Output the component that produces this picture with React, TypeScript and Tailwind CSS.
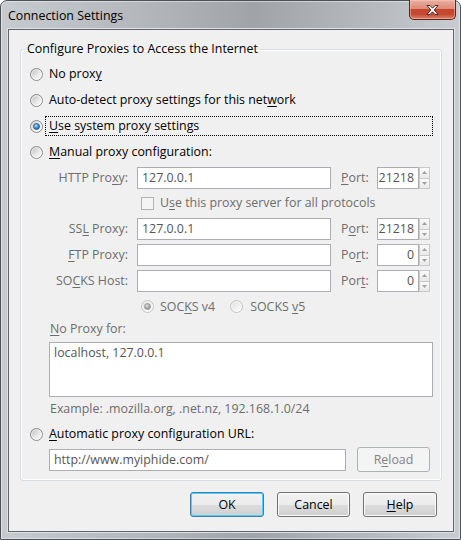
import React from "react";

// Windows 7 style "Connection Settings" dialog

type RadioState = "off" | "on" | "disabledOn" | "disabledOff";

function Radio({ state = "off" }: { state?: RadioState }) {
  const disabled = state === "disabledOn" || state === "disabledOff";
  const checked = state === "on" || state === "disabledOn";
  const id = `radio-${state}`;
  return (
    <svg width="13" height="13" viewBox="0 0 13 13" className="shrink-0">
      <defs>
        <linearGradient id={`${id}-bg`} x1="0" y1="0" x2="1" y2="1">
          <stop offset="0" stopColor={disabled ? "#dcdcdc" : "#b9b9b9"} />
          <stop offset="0.6" stopColor={disabled ? "#f2f2f2" : "#ececec"} />
          <stop offset="1" stopColor="#fbfbfb" />
        </linearGradient>
        <radialGradient id={`${id}-dot`} cx="0.4" cy="0.35" r="0.75">
          <stop offset="0" stopColor={disabled ? "#e2e2e2" : "#b4e4ff"} />
          <stop offset="0.55" stopColor={disabled ? "#a8a8a8" : "#3a86d4"} />
          <stop offset="1" stopColor={disabled ? "#8c8c8c" : "#164f96"} />
        </radialGradient>
      </defs>
      <circle
        cx="6.5"
        cy="6.5"
        r="6"
        fill={`url(#${id}-bg)`}
        stroke={disabled ? "#c4c4c4" : "#8b8b8b"}
      />
      <circle cx="6.5" cy="6.5" r="4.8" fill="none" stroke="#ffffff" strokeOpacity="0.55" />
      {checked && (
        <circle
          cx="6.5"
          cy="6.5"
          r="3"
          fill={`url(#${id}-dot)`}
          stroke={disabled ? "#8e8e8e" : "#21507f"}
          strokeWidth="0.7"
        />
      )}
    </svg>
  );
}

// access key underline
function K({ c }: { c: string }) {
  return <span className="underline underline-offset-[2px] decoration-1">{c}</span>;
}

function TextBox({
  value = "",
  className = "",
  alignRight = false,
}: {
  value?: string;
  className?: string;
  alignRight?: boolean;
}) {
  return (
    <div
      className={`h-[22px] bg-white border border-[#abadb3] flex items-center px-[4px] text-[#555555] whitespace-nowrap ${
        alignRight ? "justify-end" : ""
      } ${className}`}
    >
      {value}
    </div>
  );
}

function Spinner() {
  return (
    <div className="flex flex-col w-[11px] h-[22px] shrink-0">
      <div className="flex-1 border border-[#c9c9c9] bg-gradient-to-b from-[#fafafa] to-[#e9e9e9] flex items-center justify-center">
        <svg width="5" height="3" viewBox="0 0 5 3">
          <path d="M0 3 L2.5 0 L5 3 Z" fill="#a0a0a0" />
        </svg>
      </div>
      <div className="flex-1 border border-t-0 border-[#c9c9c9] bg-gradient-to-b from-[#fafafa] to-[#e9e9e9] flex items-center justify-center">
        <svg width="5" height="3" viewBox="0 0 5 3">
          <path d="M0 0 L2.5 3 L5 0 Z" fill="#a0a0a0" />
        </svg>
      </div>
    </div>
  );
}

function ProxyRow({
  label,
  host,
  port,
  portLabel,
  className = "",
}: {
  label: React.ReactNode;
  host: string;
  port: string;
  portLabel: React.ReactNode;
  className?: string;
}) {
  return (
    <div className={`flex items-center h-[22px] ${className}`}>
      <div className="w-[98px] text-right text-[#6d6d6d] whitespace-nowrap">{label}</div>
      <TextBox value={host} className="ml-[9px] w-[194px]" />
      <div className="ml-[10px] w-[36px] text-[#6d6d6d]">{portLabel}</div>
      <TextBox value={port} alignRight className="w-[42px] px-[2px]" />
      <Spinner />
    </div>
  );
}

function Button({
  children,
  primary = false,
  disabled = false,
  className = "",
}: {
  children: React.ReactNode;
  primary?: boolean;
  disabled?: boolean;
  className?: string;
}) {
  if (disabled) {
    return (
      <div
        className={`h-[25px] rounded-[3px] border border-[#adb2b5] bg-[#f4f4f4] text-[#838383] flex items-center justify-center ${className}`}
      >
        {children}
      </div>
    );
  }
  return (
    <div
      className={`h-[25px] rounded-[3px] border ${
        primary ? "border-[#3c7fb1] shadow-[inset_0_0_0_1px_#48d1ff]" : "border-[#707070] shadow-[inset_0_0_0_1px_#fcfcfc]"
      } bg-[linear-gradient(180deg,#f2f2f2_0%,#ebebeb_50%,#dddddd_50%,#cfcfcf_100%)] text-black flex items-center justify-center ${className}`}
    >
      {children}
    </div>
  );
}

export default function App() {
  return (
    <div className="w-[461px] h-[540px] font-['Open_Sans','Noto_Sans',sans-serif] text-[12.4px] leading-[16px] text-black">
      <div className="relative w-full h-full rounded-t-[7px] border border-[#4d5157] bg-[linear-gradient(90deg,#c6cbd0_0%,#b4b8bd_30%,#a0a4a9_55%,#b5b9be_80%,#c9cdd1_100%)] shadow-[inset_0_0_0_1px_rgba(255,255,255,0.45)] flex flex-col">
        {/* title bar */}
        <div className="h-[28px] flex items-center pl-[7px] pt-[1px] text-black">Connection Settings</div>

        {/* close button */}
        <div className="absolute top-[-1px] right-[4px] w-[47px] h-[20px] rounded-b-[5px] border border-t-0 border-[#5b2519] bg-[linear-gradient(180deg,#eab0a2_0%,#dc8b77_45%,#c7442b_50%,#c54a31_75%,#d8836c_100%)] shadow-[inset_0_0_0_1px_rgba(255,200,190,0.5)] flex items-center justify-center">
          <svg width="15" height="12" viewBox="0 0 15 12">
            <path
              d="M2 1.5 L5 1.5 L7.5 4.2 L10 1.5 L13 1.5 L9.2 6 L13 10.5 L10 10.5 L7.5 7.8 L5 10.5 L2 10.5 L5.8 6 Z"
              fill="#ffffff"
              stroke="#4a2a28"
              strokeWidth="1"
              strokeLinejoin="round"
            />
          </svg>
        </div>

        {/* client area */}
        <div className="ml-[7px] w-[446px] flex-1 mb-[7px] border border-[#62666b] shadow-[0_0_0_1px_#dde0e4] bg-[#f0f0f0] pl-[11px] pt-[11px] flex flex-col">
          <fieldset className="w-[420px] border border-[#d5dfe5] rounded-[3px] pb-[8px] shadow-[inset_0_0_0_1px_#ffffff]">
            <legend className="ml-[5px] px-[1px] leading-[16px]">Configure Proxies to Access the Internet</legend>

            <div className="pt-[4px] pl-[9px] pr-[8px] flex flex-col">
              <div className="h-[26px] flex items-center">
                <Radio />
                <span className="ml-[6px]">
                  No prox<K c="y" />
                </span>
              </div>
              <div className="h-[26px] flex items-center">
                <Radio />
                <span className="ml-[6px]">
                  Auto-detect proxy settings for this net<K c="w" />ork
                </span>
              </div>
              <div className="h-[26px] flex items-center">
                <Radio state="on" />
                <span className="ml-[2px] flex-1 h-[20px] flex items-center px-[3px] border border-dotted border-black">
                  <K c="U" />se system proxy settings
                </span>
              </div>
              <div className="h-[26px] flex items-center">
                <Radio />
                <span className="ml-[6px]">
                  <K c="M" />anual proxy configuration:
                </span>
              </div>

              <ProxyRow
                className="mt-[2px]"
                label={
                  <>
                    HTTP Pro<K c="x" />y:
                  </>
                }
                host="127.0.0.1"
                port="21218"
                portLabel={
                  <>
                    <K c="P" />ort:
                  </>
                }
              />

              <div className="mt-[3px] h-[22px] flex items-center pl-[111px]">
                <div className="w-[13px] h-[13px] border border-[#b1b1b1] bg-[#f4f4f4] shrink-0" />
                <span className="ml-[6px] text-[#6d6d6d]">
                  U<K c="s" />e this proxy server for all protocols
                </span>
              </div>

              <ProxyRow
                className="mt-[4px]"
                label={
                  <>
                    SS<K c="L" /> Proxy:
                  </>
                }
                host="127.0.0.1"
                port="21218"
                portLabel={
                  <>
                    P<K c="o" />rt:
                  </>
                }
              />
              <ProxyRow
                className="mt-[4px]"
                label={
                  <>
                    <K c="F" />TP Proxy:
                  </>
                }
                host=""
                port="0"
                portLabel={
                  <>
                    Po<K c="r" />t:
                  </>
                }
              />
              <ProxyRow
                className="mt-[4px]"
                label={
                  <>
                    SO<K c="C" />KS Host:
                  </>
                }
                host=""
                port="0"
                portLabel={
                  <>
                    Por<K c="t" />:
                  </>
                }
              />

              <div className="mt-[4px] h-[21px] flex items-center pl-[111px] text-[#6d6d6d]">
                <Radio state="disabledOn" />
                <span className="ml-[6px]">
                  SOC<K c="K" />S v4
                </span>
                <div className="ml-[15px] flex items-center">
                  <Radio state="disabledOff" />
                  <span className="ml-[7px]">
                    SOCKS <K c="v" />5
                  </span>
                </div>
              </div>

              <div className="pl-[19px] flex flex-col">
                <div className="mt-[3px] h-[18px] flex items-center pl-[1px] text-[#6d6d6d]">
                  <K c="N" />o Proxy for:
                </div>
                <div className="mt-[4px] h-[55px] w-[384px] bg-white border border-[#abadb3] px-[4px] pt-[2px] text-[#555555]">
                  localhost, 127.0.0.1
                </div>
                <div className="mt-[4px] h-[16px] flex items-center pl-[1px] text-[#6d6d6d]">
                  Example: .mozilla.org, .net.nz, 192.168.1.0/24
                </div>
              </div>

              <div className="mt-[4px] h-[26px] flex items-center">
                <Radio />
                <span className="ml-[6px]">
                  <K c="A" />utomatic proxy configuration URL:
                </span>
              </div>

              <div className="h-[25px] flex items-center pl-[19px]">
                <TextBox value="http://www.myiphide.com/" className="w-[297px] h-[21px]" />
                <Button disabled className="ml-[11px] w-[73px]">
                  R<K c="e" />load
                </Button>
              </div>
            </div>
          </fieldset>

          <div className="mt-[11px] w-[420px] flex justify-end gap-[13px] pr-[3px]">
            <Button primary className="w-[74px]">
              OK
            </Button>
            <Button className="w-[73px]">Cancel</Button>
            <Button className="w-[74px]">
              <K c="H" />elp
            </Button>
          </div>
        </div>
      </div>
    </div>
  );
}
